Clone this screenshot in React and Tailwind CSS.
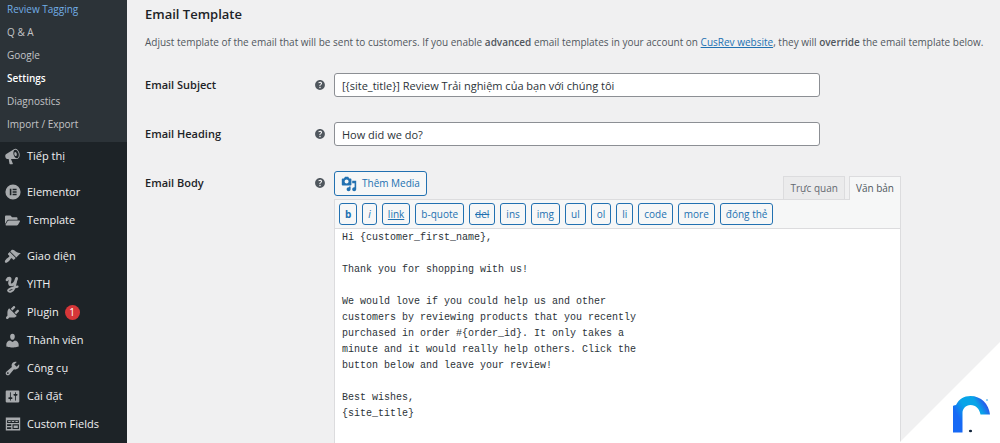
import React from 'react';
import { FaFolderOpen } from 'react-icons/fa';

const submenu = ['Review Tagging', 'Q & A', 'Google', 'Settings', 'Diagnostics', 'Import / Export'];

const paths = {
  megaphone:
    'M18.15 5.94c.46 1.62.38 3.22-.02 4.48-.42 1.28-1.26 2.18-2.3 2.48-.16.06-.26.06-.4.06-.06.02-.12.02-.18.02-.06.02-.14.02-.22.02h-6.8l2.22 5.5c.02.14-.06.26-.14.34-.08.1-.24.16-.34.16H6.95c-.1 0-.26-.06-.34-.16-.08-.08-.16-.2-.14-.34l-1-5.5H4.25l-.02-.02c-.5.06-1.08-.18-1.54-.62s-.88-1.08-1.06-1.88c-.24-.8-.2-1.56-.02-2.2.18-.62.58-1.08 1.06-1.3l.02-.02 9-5.4c.1-.06.18-.1.24-.16.06-.04.14-.08.24-.12.16-.08.28-.12.5-.18 1.04-.3 2.24.1 3.22.98s1.84 2.24 2.26 3.86zm-2.58 5.98h-.02c.4-.1.74-.34 1.04-.7.58-.7.86-1.76.86-3.04 0-.64-.1-1.3-.28-1.98-.34-1.36-1.02-2.5-1.78-3.24s-1.68-1.1-2.46-.88c-.82.22-1.4.96-1.7 2-.32 1.04-.28 2.36.06 3.72.38 1.36 1 2.5 1.8 3.24.78.74 1.62 1.1 2.48.88zm-2.54-7.08c.22-.04.42-.02.62.04.38.16.76.48 1.02 1s.42 1.2.42 1.78c0 .3-.04.56-.12.8-.18.48-.44.84-.86.94-.34.1-.8-.06-1.14-.4s-.64-.86-.78-1.5c-.18-.62-.12-1.24.02-1.72s.48-.84.82-.94z',
  elementor:
    'M10 0.5a9.5 9.5 0 1 0 0 19a9.5 9.5 0 1 0 0-19zM6 6h2v8H6zM9.5 6h5v1.8h-5zM9.5 9.1h5v1.8h-5zM9.5 12.2h5V14h-5z',
  brush:
    'M14.48 11.06L7.41 3.99l1.5-1.5c.5-.56 2.3-.47 3.51.32 1.21.8 1.43 1.28 2.91 2.1 1.18.64 2.45 1.26 4.45.85zm-.71.71L6.7 4.7 4.93 6.47c-.39.39-.39 1.02 0 1.41l1.06 1.06c.39.39.39 1.03 0 1.42-.6.6-1.43 1.11-2.21 1.69-.35.26-.7.53-1.01.84C1.43 14.23.4 16.08 1.4 17.07c.99 1 2.84-.03 4.18-1.36.31-.31.58-.66.85-1.02.57-.78 1.08-1.61 1.69-2.21.39-.39 1.02-.39 1.41 0l1.06 1.06c.39.39 1.02.39 1.41 0z',
  plug:
    'M13.11 4.36L9.87 7.6 8 5.73l3.24-3.24c.35-.34 1.05-.2 1.56.32.52.51.66 1.21.31 1.55zm-8 1.77l.91-1.12 9.01 9.01-1.19.84c-.71.71-2.63 1.16-3.82 1.16H6.14L4.9 17.26c-.59.59-1.54.59-2.12 0-.59-.58-.59-1.53 0-2.12l1.24-1.24v-3.88c0-1.13.4-3.19 1.09-3.89zm7.26 3.97l3.24-3.24c.34-.35 1.04-.21 1.55.31.52.51.66 1.21.31 1.55l-3.24 3.25z',
  user:
    'M10 9.25c-2.27 0-2.73-3.44-2.73-3.44C7 4.02 7.82 2 9.97 2c2.16 0 2.98 2.02 2.71 3.81 0 0-.41 3.44-2.68 3.44zm0 2.57L12.72 10c2.39 0 4.52 2.33 4.52 4.53v2.49s-3.65 1.13-7.24 1.13c-3.65 0-7.24-1.13-7.24-1.13v-2.49c0-2.25 1.94-4.48 4.47-4.48z',
  wrench:
    'M16.68 9.77c-1.34 1.34-3.3 1.67-4.95.99l-5.41 6.52c-.99.99-2.59.99-3.58 0s-.99-2.59 0-3.57l6.52-5.42c-.68-1.65-.35-3.61.99-4.95 1.28-1.28 3.12-1.62 4.72-1.06l-2.89 2.89 2.82 2.82 2.86-2.87c.53 1.58.18 3.39-1.08 4.65zM3.81 16.21c.4.39 1.04.39 1.43 0 .4-.4.4-1.04 0-1.43-.39-.4-1.03-.4-1.43 0-.39.39-.39 1.03 0 1.43z',
  sliders:
    'M18 16V4c0-.55-.45-1-1-1H3c-.55 0-1 .45-1 1v12c0 .55.45 1 1 1h14c.55 0 1-.45 1-1zM8 11h1c.55 0 1 .45 1 1s-.45 1-1 1H8v1.5c0 .28-.22.5-.5.5s-.5-.22-.5-.5V13H6c-.55 0-1-.45-1-1s.45-1 1-1h1V5.5c0-.28.22-.5.5-.5s.5.22.5.5V11zm5-2h-1c-.55 0-1-.45-1-1s.45-1 1-1h1V5.5c0-.28.22-.5.5-.5s.5.22.5.5V7h1c.55 0 1 .45 1 1s-.45 1-1 1h-1v5.5c0 .28-.22.5-.5.5s-.5-.22-.5-.5V9z',
  fields:
    'M1 2h18v16H1zM2.6 5.2v3.6h14.8V5.2zM2.6 10.4v2.2h5.2v-2.2zM2.6 14.2v2.2h5.2v-2.2zM9.4 10.4v6h8v-6zM4 6.4h3v1.2H4zM8.5 6.4h3v1.2h-3zM13 6.4h3v1.2h-3zM10.8 12h5.2v3h-5.2z',
  media:
    'M13 11V4c0-.55-.45-1-1-1h-1.67L9 1H5L3.67 3H2c-.55 0-1 .45-1 1v7c0 .55.45 1 1 1h10c.55 0 1-.45 1-1zM7 4.5c1.38 0 2.5 1.12 2.5 2.5S8.38 9.5 7 9.5 4.5 8.38 4.5 7 5.62 4.5 7 4.5zM14 6h5v10.5c0 1.38-1.12 2.5-2.5 2.5S14 17.88 14 16.5s1.12-2.5 2.5-2.5c.17 0 .34.02.5.05V9h-3V6zm-4 8.05V13h2v3.5c0 1.38-1.12 2.5-2.5 2.5S7 17.88 7 16.5 8.12 14 9.5 14c.17 0 .34.02.5.05z',
  help:
    'M17 10c0-3.87-3.14-7-7-7-3.87 0-7 3.13-7 7s3.13 7 7 7c3.86 0 7-3.13 7-7zm-6.3 1.48H9.14v-.43c0-.38.08-.7.24-.98s.46-.57.88-.89c.41-.29.68-.53.81-.71.14-.18.2-.39.2-.62 0-.25-.09-.44-.28-.58-.19-.13-.45-.19-.79-.19-.58 0-1.25.15-2 .46l-.64-1.28c.87-.49 1.8-.74 2.77-.74.81 0 1.45.2 1.92.58.48.39.71.91.71 1.55 0 .43-.09.8-.29 1.11-.19.32-.57.67-1.11 1.06-.38.28-.61.49-.71.63-.1.15-.15.34-.15.57v.46zm-1.47 2.74c-.18-.17-.27-.42-.27-.73 0-.33.08-.58.26-.75s.43-.25.77-.25c.32 0 .57.09.75.26s.27.42.27.74c0 .3-.09.55-.27.72-.18.18-.43.27-.75.27-.33 0-.58-.09-.76-.26z',
};

function Icon({ name, className = 'size-[17px]' }) {
  return (
    <svg viewBox="0 0 20 20" className={`shrink-0 ${className}`} fill="currentColor" fillRule="evenodd" aria-hidden="true">
      <path d={paths[name]} />
    </svg>
  );
}

function YithIcon() {
  return (
    <svg viewBox="0 0 20 20" className="size-[17px] shrink-0" fill="none" stroke="currentColor" strokeLinecap="round" aria-hidden="true">
      <path d="M3.5 4.5C5 2 7.8 1.8 7.2 4.5C6.7 7 5.4 10.5 8.4 10.5C11.4 10.5 13.6 6.5 14.6 3" strokeWidth="3.2" />
      <path d="M15 2.5C14 7 13 12 11.8 15C10.6 18.6 6 19.4 5 17.5C4.2 15.6 8.5 13.8 16 12.5" strokeWidth="2.4" />
    </svg>
  );
}

const groups = [
  { gap: '', items: [['Tiếp thị', <Icon name="megaphone" />]] },
  {
    gap: 'mt-2',
    items: [
      ['Elementor', <Icon name="elementor" className="size-4" />],
      ['Template', <FaFolderOpen className="size-[15px]" />],
    ],
  },
  {
    gap: 'mt-2',
    items: [
      ['Giao diện', <Icon name="brush" />],
      ['YITH', <YithIcon />],
      ['Plugin', <Icon name="plug" />, 1],
      ['Thành viên', <Icon name="user" />],
      ['Công cụ', <Icon name="wrench" />],
      ['Cài đặt', <Icon name="sliders" />],
      ['Custom Fields', <Icon name="fields" className="size-4" />],
    ],
  },
];

const tags = [
  ['b', 'font-bold'],
  ['i', 'italic'],
  ['link', 'underline'],
  ['b-quote', ''],
  ['del', 'line-through'],
  ['ins', ''],
  ['img', ''],
  ['ul', ''],
  ['ol', ''],
  ['li', ''],
  ['code', ''],
  ['more', ''],
  ['đóng thẻ', ''],
];

const body = `Hi {customer_first_name},

Thank you for shopping with us!

We would love if you could help us and other
customers by reviewing products that you recently
purchased in order #{order_id}. It only takes a
minute and it would really help others. Click the
button below and leave your review!

Best wishes,
{site_title}`;

function Sidebar() {
  return (
    <nav className="w-[127px] shrink-0 bg-[#1d2327] text-[#f0f0f1]">
      <ul className="-mt-0.5 bg-[#2c3338] pb-1.5 text-[10px]">
        {submenu.map((label) => (
          <li key={label}>
            <a
              href="#"
              className={`flex h-[23px] items-center pl-[7px] ${
                label === 'Settings'
                  ? 'font-semibold text-white'
                  : label === 'Review Tagging'
                    ? 'text-[#72aee6]'
                    : 'text-[#c3c4c7]'
              }`}
            >
              {label}
            </a>
          </li>
        ))}
      </ul>
      {groups.map((group, i) => (
        <ul key={i} className={`text-[11px] ${group.gap}`}>
          {group.items.map(([label, icon, count]) => (
            <li key={label}>
              <a href="#" className="flex h-7 items-center">
                <span className="flex w-[27px] shrink-0 justify-center pr-0.5 text-[#a7aaad]">{icon}</span>
                <span>{label}</span>
                {count && (
                  <span className="ml-1.5 flex size-[15px] items-center justify-center rounded-full bg-[#d63638] text-[10px] leading-none text-white">
                    {count}
                  </span>
                )}
              </a>
            </li>
          ))}
        </ul>
      ))}
    </nav>
  );
}

function FieldLabel({ id, children }) {
  return (
    <div className="flex h-6 w-[189px] shrink-0 items-center justify-between pr-[7px]">
      <label htmlFor={id} className="text-[11px] font-semibold text-[#1d2327]">
        {children}
      </label>
      <Icon name="help" className="size-[14px] text-[#50575e]" />
    </div>
  );
}

function TextField({ id, label, value }) {
  return (
    <div className="flex">
      <FieldLabel id={id}>{label}</FieldLabel>
      <input
        id={id}
        type="text"
        defaultValue={value}
        className="h-6 w-full max-w-[486px] rounded-[3px] border border-[#8c8f94] bg-white px-[7px] text-[11px] text-[#2c3338]"
      />
    </div>
  );
}

function Editor() {
  return (
    <div className="flex w-full max-w-[567px] flex-col">
      <div className="flex h-7 justify-between">
        <button
          type="button"
          className="flex h-[25px] items-center gap-[5px] rounded-[3px] border border-[#2271b1] bg-[#f6f7f7] px-1.5 text-[10px] text-[#2271b1]"
        >
          <Icon name="media" className="size-4" />
          Thêm Media
        </button>
        <div role="tablist" className="mt-[5px] flex gap-1 text-[10px] text-[#646970]">
          <button type="button" role="tab" aria-selected="false" className="border border-b-0 border-[#dcdcde] bg-[#ebebec] px-1.5">
            Trực quan
          </button>
          <button
            type="button"
            role="tab"
            aria-selected="true"
            className="z-10 -mb-px border border-b-0 border-[#dcdcde] bg-[#f6f7f7] px-1.5 text-[#50575e]"
          >
            Văn bản
          </button>
        </div>
      </div>
      <div className="flex flex-1 flex-col border border-b-0 border-[#dcdcde] bg-white">
        <div role="toolbar" className="flex flex-wrap gap-[5px] border-b border-[#dcdcde] bg-[#f6f7f7] px-1 py-[3px]">
          {tags.map(([label, style]) => (
            <button
              key={label}
              type="button"
              className={`h-[22px] rounded-[3px] border border-[#2271b1] bg-[#f6f7f7] px-[5px] text-[10px] text-[#2271b1] ${style}`}
            >
              {label}
            </button>
          ))}
        </div>
        <textarea
          id="email-body"
          defaultValue={body}
          spellCheck={false}
          className="block min-h-[215px] w-full flex-1 resize-none overflow-hidden bg-white px-[7px] py-px font-['Liberation_Mono',monospace] text-[10px] leading-4 text-[#2c3338] outline-none"
        />
      </div>
    </div>
  );
}

function CornerLogo() {
  return (
    <div className="pointer-events-none fixed right-0 bottom-0">
      <svg viewBox="0 0 101 101" className="block size-[101px]" aria-hidden="true">
        <defs>
          <linearGradient id="arch" gradientUnits="userSpaceOnUse" x1="55" y1="80" x2="91" y2="58">
            <stop offset="0" stopColor="#1769f5" />
            <stop offset="0.15" stopColor="#1769f5" />
            <stop offset="0.4" stopColor="#08a4e8" />
            <stop offset="0.68" stopColor="#08a4e8" />
            <stop offset="0.84" stopColor="#2563eb" />
            <stop offset="1" stopColor="#5b2fe6" />
          </linearGradient>
        </defs>
        <path d="M101 0V101H0z" fill="#fff" />
        <path
          d="M54 90.5V64Q54 63.5 57 63C60 57 65 54 71.5 54C82 54 90 62 91 72.5H81.500C80.5 67 77 63 71.5 63C66.5 63 63.5 67 63.5 71V90.5z"
          fill="url(#arch)"
        />
        <circle cx="88" cy="58" r="1" fill="#7cc4ee" />
        <ellipse cx="71.5" cy="89" rx="1.6" ry="1.2" fill="#10243c" />
      </svg>
    </div>
  );
}

export default function App() {
  return (
    <div className="flex min-h-screen overflow-hidden bg-[#f0f0f1] font-['Open_Sans','Noto_Sans',sans-serif]">
      <Sidebar />
      <main className="flex min-w-0 flex-1 flex-col pt-1 pr-2 pl-[18px]">
        <h2 className="text-[13px] leading-5 font-semibold text-[#1d2327]">Email Template</h2>
        <p className="mt-2.5 text-[10px] leading-4 text-[#50575e]">
          Adjust template of the email that will be sent to customers. If you enable{' '}
          <b className="font-semibold">advanced</b> email templates in your account on{' '}
          <a href="#" className="text-[#2271b1] underline">
            CusRev website
          </a>
          , they will <b className="font-semibold">override</b> the email template below.
        </p>
        <form className="mt-[23px] flex flex-1 flex-col gap-[25px]">
          <TextField id="email-subject" label="Email Subject" value="[{site_title}] Review Trải nghiệm của bạn với chúng tôi" />
          <TextField id="email-heading" label="Email Heading" value="How did we do?" />
          <div className="flex flex-1">
            <FieldLabel id="email-body">Email Body</FieldLabel>
            <Editor />
          </div>
        </form>
      </main>
      <CornerLogo />
    </div>
  );
}
